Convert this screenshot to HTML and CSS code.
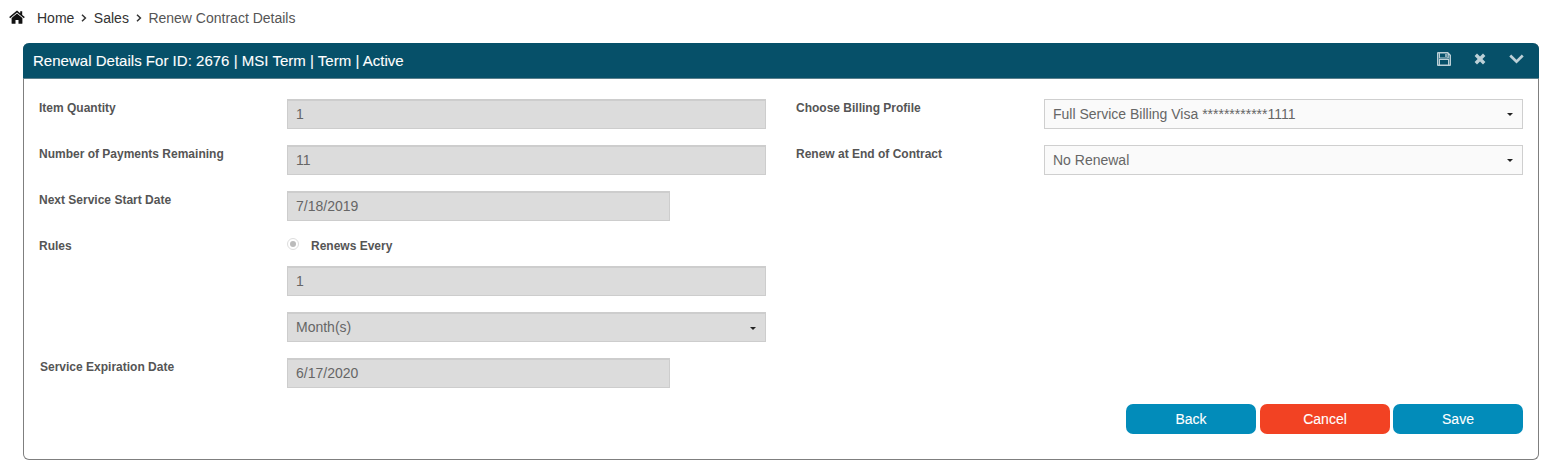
FILE: index.html
```html
<!DOCTYPE html>
<html lang="en">
<head>
<meta charset="utf-8">
<title>Renew Contract Details</title>
<link rel="stylesheet" href="styles.css">
</head>
<body>
<nav class="crumbs">
  <svg class="home" viewBox="0 0 16 14" width="16" height="14" aria-hidden="true"><path d="M8 .6 .2 7.1l.9 1.1L8 2.500l6.900 5.700.9-1.100L13.200 5V1.200h-2v2.100L8 .6ZM8 3.600 2.600 8v5.200a.6.6 0 0 0 .6.6h3.300V9.900h3v3.900h3.300a.6.6 0 0 0 .6-.6V8L8 3.600Z"/></svg>
  <span class="crumb">Home</span>
  <svg class="sep" viewBox="0 0 6 8" width="6" height="8" aria-hidden="true"><path d="M1 .8 4.400 4 1 7.200" fill="none" stroke="#333" stroke-width="1.500"/></svg>
  <span class="crumb">Sales</span>
  <svg class="sep" viewBox="0 0 6 8" width="6" height="8" aria-hidden="true"><path d="M1 .8 4.400 4 1 7.200" fill="none" stroke="#333" stroke-width="1.500"/></svg>
  <span class="crumb current">Renew Contract Details</span>
</nav>
<section class="panel">
  <header class="panel-head">
    <h1>Renewal Details For ID: 2676 | MSI Term | Term | Active</h1>
    <div class="tools">
      <svg viewBox="0 0 14 14" width="14" height="14" aria-hidden="true"><path fill-rule="evenodd" d="M1 0h10l3 3v10a1 1 0 0 1-1 1H1a1 1 0 0 1-1-1V1a1 1 0 0 1 1-1Zm2 1.500v4h7.500v-4H3Zm5.300.6h1.400v2.800H8.300V2.100ZM3 8v4.500h8V8H3ZM1.500 1.500v11H2V7h10v5.500h.5V3.600L11.800 2.900V6.500H2V1.500h-.5Z"/></svg>
      <svg viewBox="0 0 12 12" width="12" height="12" aria-hidden="true"><path d="M3 .6 6 3.600 9 .6 11.400 3 8.400 6l3 3L9 11.400l-3-3-3 3L.6 9l3-3-3-3L3 .6Z"/></svg>
      <svg viewBox="0 0 15 10" width="15" height="10" aria-hidden="true"><path d="M2.200.6 7.500 5.800 12.800.6l1.900 1.900-7.200 7L.3 2.500 2.200.6Z"/></svg>
    </div>
  </header>
  <div class="panel-body">
    <div class="columns">
      <div class="col">
        <div class="row"><label>Item Quantity</label><div class="field"><div class="box">1</div></div></div>
        <div class="row"><label>Number of Payments Remaining</label><div class="field"><div class="box">11</div></div></div>
        <div class="row"><label>Next Service Start Date</label><div class="field"><div class="box short">7/18/2019</div></div></div>
        <div class="row"><label>Rules</label>
          <div class="field stack">
            <div class="radio-line"><span class="radio"></span><span class="radio-text">Renews Every</span></div>
            <div class="box">1</div>
            <div class="box select">Month(s)<span class="caret"></span></div>
          </div>
        </div>
        <div class="row"><label class="nudge">Service Expiration Date</label><div class="field"><div class="box short">6/17/2020</div></div></div>
      </div>
      <div class="col">
        <div class="row"><label>Choose Billing Profile</label><div class="field"><div class="box select open">Full Service Billing Visa ************1111<span class="caret"></span></div></div></div>
        <div class="row"><label>Renew at End of Contract</label><div class="field"><div class="box select open">No Renewal<span class="caret"></span></div></div></div>
      </div>
    </div>
    <div class="actions">
      <button class="btn blue back">Back</button>
      <button class="btn red">Cancel</button>
      <button class="btn blue">Save</button>
    </div>
  </div>
</section>
</body>
</html>
```
FILE: styles.css
```css
* { box-sizing: border-box; }
html, body { height: 100%; }
body {
  margin: 0;
  background: #fff;
  font-family: "Liberation Sans", Arial, sans-serif;
  font-size: 14px;
  color: #555;
  overflow: hidden;
}
.crumbs {
  display: flex;
  align-items: center;
  height: 36px;
  padding-left: 9px;
  color: #333;
  font-size: 14px;
}
.home { fill: #111; margin-right: 12px; position: relative; top: -1px; }
.sep { margin: 0 6.500px 0 7px; }
.current { color: #555; }
.panel {
  margin: 7px 14px 0 23px;
  height: 417px;
  border: 1px solid #7f7f7f;
  border-top: 0;
  border-radius: 6px;
  display: flex;
  flex-direction: column;
}
.panel-head {
  margin: 0 -1px;
  height: 36px;
  flex: none;
  background: #065069;
  border-radius: 6px 6px 0 0;
  border-bottom: 1px solid #5b7f8c;
  display: flex;
  align-items: center;
  justify-content: space-between;
  padding: 0 15px 0 10px;
}
.panel-head h1 {
  margin: 0;
  font-size: 15px;
  font-weight: 400;
  color: #fff;
  line-height: 36px;
  letter-spacing: 0.02px;
  -webkit-text-stroke: 0.1px #fff;
}
.tools { display: flex; align-items: center; gap: 23px; margin-top: -4px; }
.tools svg { fill: #bcd0d7; }
.panel-body {
  flex: 1;
  padding: 20px 15px 0;
  display: flex;
  flex-direction: column;
}
.columns {
  display: grid;
  grid-template-columns: 727px 727px;
  column-gap: 30px;
}
.col { display: flex; flex-direction: column; gap: 16px; }
.row { display: grid; grid-template-columns: 248px 479px; }
.row label {
  font-size: 12px;
  font-weight: 700;
  color: #555;
  line-height: 14px;
  padding-top: 2px;
}
.row label.nudge { padding-left: 1px; }
.field { display: flex; flex-direction: column; }
.stack { gap: 16px; }
.box {
  height: 30px;
  background: #dcdcdc;
  border-style: solid;
  border-color: #cdcdcd;
  border-width: 2px 1px 1px 1px;
  padding: 0 8px;
  line-height: 27px;
  font-size: 14px;
  color: #666;
  position: relative;
}
.short { width: 383px; }
.select.open {
  background: #fafafa;
  border: 1px solid #cfcfcf;
  line-height: 28px;
}
.caret {
  position: absolute;
  right: 9px;
  top: 13px;
  width: 0;
  height: 0;
  border-left: 3px solid transparent;
  border-right: 3px solid transparent;
  border-top: 3px solid #222;
}
.radio-line {
  display: flex;
  align-items: center;
  height: 18px;
  margin-bottom: -5px;
}
.radio {
  width: 12px;
  height: 12px;
  border-radius: 50%;
  background: #fff;
  border: 1px solid #ddd;
  position: relative;
  margin-top: -5px;
}
.radio::after {
  content: "";
  position: absolute;
  inset: 2px;
  border-radius: 50%;
  background: #bbb;
}
.radio-text {
  margin-left: 12px;
  font-size: 12px;
  font-weight: 700;
  color: #555;
}
.actions {
  display: flex;
  justify-content: flex-end;
  gap: 3px;
  margin-top: 16px;
}
.btn {
  width: 130px;
  height: 30px;
  border: 0;
  border-radius: 7px;
  color: #fff;
  font-family: inherit;
  font-size: 14px;
  padding: 0;
  -webkit-text-stroke: 0.1px #fff;
}
.back { margin-right: 1px; }
.blue { background: #028cba; }
.red { background: #f24223; }
```
